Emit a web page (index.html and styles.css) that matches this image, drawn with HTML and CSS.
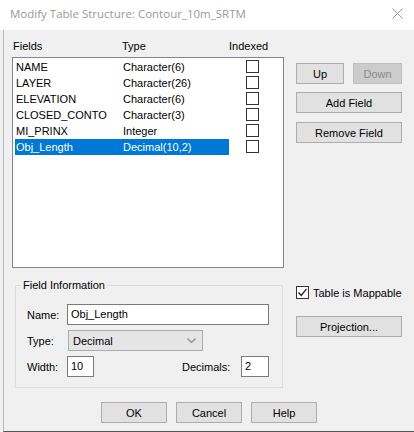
FILE: index.html
```html
<!DOCTYPE html>
<html>
<head>
<meta charset="utf-8">
<link rel="stylesheet" href="styles.css">
</head>
<body>
<div class="window">
  <div class="titlebar">
    <span class="title">Modify Table Structure: Contour_10m_SRTM</span>
    <svg class="close" width="11" height="11" viewBox="0 0 11 11"><path d="M0.5 0.5 L10.5 10.5 M10.5 0.5 L0.5 10.5" stroke="#9a9a9a" stroke-width="1" fill="none"/></svg>
  </div>
  <div class="body">
    <div class="top">
      <div class="left">
        <div class="cols">
          <span class="c-name">Fields</span>
          <span class="c-type">Type</span>
          <span class="c-idx">Indexed</span>
        </div>
        <div class="list">
          <div class="row"><span class="cell"><span class="fname">NAME</span><span>Character(6)</span></span><span class="cb"></span></div>
          <div class="row"><span class="cell"><span class="fname">LAYER</span><span>Character(26)</span></span><span class="cb"></span></div>
          <div class="row"><span class="cell"><span class="fname">ELEVATION</span><span>Character(6)</span></span><span class="cb"></span></div>
          <div class="row"><span class="cell"><span class="fname">CLOSED_CONTO</span><span>Character(3)</span></span><span class="cb"></span></div>
          <div class="row"><span class="cell"><span class="fname">MI_PRINX</span><span>Integer</span></span><span class="cb"></span></div>
          <div class="row"><span class="cell sel"><span class="fname">Obj_Length</span><span>Decimal(10,2)</span></span><span class="cb"></span></div>
        </div>
        <fieldset class="group">
          <legend>Field Information</legend>
          <div class="frow">
            <span class="lbl">Name:</span>
            <span class="input name-in">Obj_Length</span>
          </div>
          <div class="frow">
            <span class="lbl">Type:</span>
            <span class="select"><span>Decimal</span>
              <svg width="9" height="6" viewBox="0 0 9 6"><path d="M0.5 0.5 L4.5 4.5 L8.5 0.5" stroke="#8a8a8a" stroke-width="1.2" fill="none"/></svg>
            </span>
          </div>
          <div class="frow">
            <span class="lbl">Width:</span>
            <span class="input small-in">10</span>
            <span class="dec-lbl">Decimals:</span>
            <span class="input small-in dec-in">2</span>
          </div>
        </fieldset>
      </div>
      <div class="right">
        <div class="btnrow">
          <span class="btn up">Up</span>
          <span class="btn down disabled">Down</span>
        </div>
        <span class="btn wide">Add Field</span>
        <span class="btn wide">Remove Field</span>
        <div class="check">
          <span class="cb checked">
            <svg width="11" height="11" viewBox="0 0 11 11"><path d="M1.5 5.5 L4.2 8.5 L9.5 1.8" stroke="#222" stroke-width="1.3" fill="none"/></svg>
          </span>
          <span class="check-lbl">Table is Mappable</span>
        </div>
        <span class="btn wide">Projection...</span>
      </div>
    </div>
    <div class="footer">
      <span class="btn fbtn">OK</span>
      <span class="btn fbtn">Cancel</span>
      <span class="btn fbtn">Help</span>
    </div>
  </div>
</div>
</body>
</html>
```
FILE: styles.css
```css
* { box-sizing: border-box; }
html, body { margin: 0; padding: 0; }
body {
  width: 414px;
  height: 432px;
  overflow: hidden;
  background: #f0f0f0;
  font-family: "Liberation Sans", Arial, sans-serif;
  font-size: 11px;
  color: #000;
}
.window {
  width: 414px;
  height: 432px;
  display: flex;
  flex-direction: column;
}
.titlebar {
  height: 30px;
  background: #fff;
  display: flex;
  align-items: center;
  justify-content: space-between;
  padding: 0 11px 4px 10px;
}
.title {
  font-family: "Open Sans", "Liberation Sans", sans-serif;
  font-size: 11.5px;
  color: #9a9a9a;
}
.close { margin-top: 1px; }
.body {
  flex: 1;
  margin-left: 3px;
  border-left: 1px solid #b9b9b9;
  border-bottom: 1px solid #555;
  padding-left: 8px;
  display: flex;
  flex-direction: column;
}
.top {
  display: flex;
  gap: 12px;
}
.left {
  width: 272px;
  display: flex;
  flex-direction: column;
}
.cols {
  margin-top: 9px;
  height: 14px;
  line-height: 14px;
  margin-bottom: 4px;
  display: flex;
  padding-left: 1px;
}
.c-name { width: 109px; }
.c-type { width: 107px; }
.list {
  height: 211px;
  background: #fff;
  border: 1px solid #828790;
  padding: 1px 0 0 2px;
}
.row {
  height: 16px;
  display: flex;
  align-items: flex-start;
}
.cell {
  width: 214px;
  height: 16px;
  line-height: 16px;
  display: flex;
  padding-left: 1px;
}
.fname { width: 107px; }
.sel {
  background: #0078d7;
  color: #fff;
}
.cb {
  display: inline-flex;
  align-items: center;
  justify-content: center;
  flex-shrink: 0;
  width: 13px;
  height: 13px;
  border: 1px solid #333;
  background: #fff;
}
.row .cb {
  margin-left: 17px;
  margin-top: 1px;
}
.group {
  margin: 10px 0 0 3px;
  width: 268px;
  border: 1px solid #dcdcdc;
  padding: 12px 13px 10px 11px;
  min-width: 0;
}
.group legend {
  padding: 0 2px;
  margin-left: -6px;
  line-height: 14px;
}
.frow {
  display: flex;
  align-items: center;
  height: 21px;
  margin-bottom: 5px;
}
.frow:last-child { margin-bottom: 0; }
.lbl { width: 40px; }
.input {
  height: 21px;
  background: #fff;
  border: 1px solid #7a7a7a;
  line-height: 19px;
  padding-left: 3px;
}
.name-in { width: 202px; }
.small-in { width: 27px; }
.dec-lbl { margin-left: 88px; width: 59px; }
.dec-in { width: 28px; }
.select {
  width: 135px;
  height: 21px;
  background: #e5e5e5;
  border: 1px solid #acacac;
  display: flex;
  align-items: center;
  justify-content: space-between;
  padding: 0 6px 0 4px;
  margin-left: 1px;
}
.right {
  width: 106px;
  display: flex;
  flex-direction: column;
  padding-top: 33px;
}
.btn {
  display: flex;
  align-items: center;
  justify-content: center;
  height: 21px;
  background: #e1e1e1;
  border: 1px solid #adadad;
}
.btnrow {
  display: flex;
  gap: 9px;
  margin-bottom: 8px;
}
.up { width: 48px; }
.down { width: 49px; }
.disabled {
  background: #cccccc;
  border-color: #bfbfbf;
  color: #8a8a8a;
}
.wide { width: 106px; margin-bottom: 9px; }
.check {
  margin-top: 134px;
  height: 13px;
  display: flex;
  align-items: center;
  gap: 4px;
  font-size: 11px;
  white-space: nowrap;
  margin-bottom: 17px;
}
.footer {
  display: flex;
  gap: 9px;
  padding-left: 89px;
  margin-top: 14px;
}
.fbtn { width: 66px; }
```
